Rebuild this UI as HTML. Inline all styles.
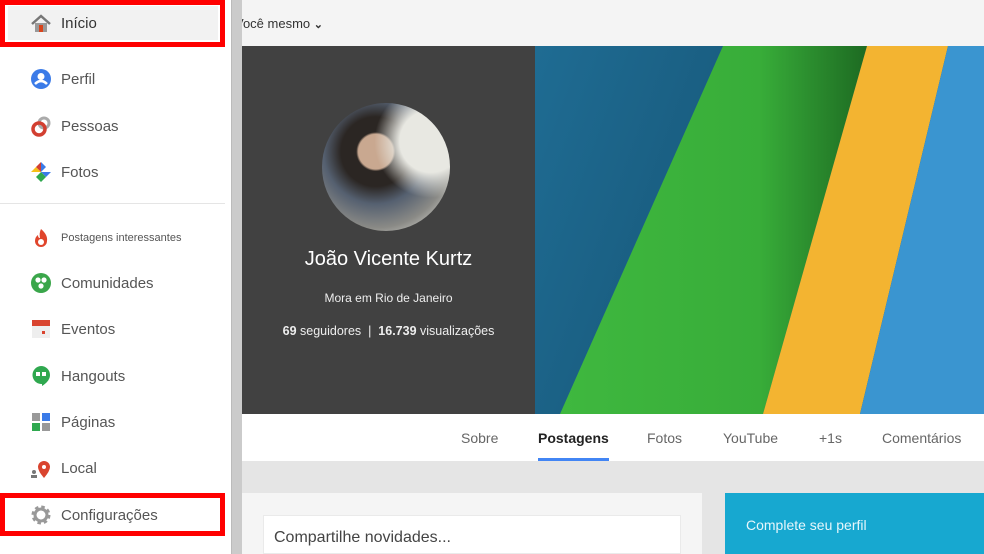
<!DOCTYPE html>
<html><head><meta charset="utf-8"><style>
*{margin:0;padding:0;box-sizing:border-box}
body{width:984px;height:554px;overflow:hidden;position:relative;background:#e5e5e5;font-family:"Liberation Sans",Arial,sans-serif}
.sb{position:absolute;left:0;top:0;width:231px;height:554px;background:#fff;z-index:2}
.strip{position:absolute;left:231px;top:0;width:11px;height:554px;background:#cbcbcb;border-left:1px solid #bbb;z-index:2}
.it{position:absolute;left:30px;height:24px;display:flex;align-items:center;font-size:15px;color:#555}
.it .ic{width:22px;height:22px;margin-right:9px;display:flex;align-items:center;justify-content:center}
.red{position:absolute;border:5px solid #f00}
.abs{position:absolute}
</style></head><body>
<div class="sb">
 <div class="abs" style="left:8px;top:6px;width:210px;height:34px;background:#f2f2f2"></div>
 <div class="red" style="left:0;top:0;width:225px;height:47px"></div>
 <div class="it" style="top:11px"><div class="ic"><svg width="22" height="20"><path d="M2 11L11 3L20 11" stroke="#777" stroke-width="2.5" fill="none"/><rect x="5" y="10" width="12" height="9" fill="#999"/><rect x="9" y="12" width="4" height="7" fill="#d9441c"/></svg></div><span style="color:#333">Início</span></div>
 <div class="it" style="top:67px"><div class="ic"><svg width="22" height="22"><circle cx="11" cy="11" r="10" fill="#3b7be8"/><circle cx="11" cy="8.5" r="3.5" fill="#fff"/><path d="M5 16q6-6 12 0" stroke="#fff" stroke-width="2.5" fill="none"/></svg></div>Perfil</div>
 <div class="it" style="top:114px"><div class="ic"><svg width="22" height="22"><circle cx="14" cy="8" r="5" fill="none" stroke="#aaa" stroke-width="3"/><circle cx="9" cy="14" r="6" fill="none" stroke="#d23f31" stroke-width="3.5"/></svg></div>Pessoas</div>
 <div class="it" style="top:160px"><div class="ic"><svg width="22" height="22"><path d="M11 11L11 1L16 6z" fill="#3b7be8"/><path d="M11 11L21 11L16 16z" fill="#3b7be8"/><path d="M11 11L11 21L6 16z" fill="#2fa84f"/><path d="M11 11L1 11L6 6z" fill="#f7c018"/><path d="M11 11L6 6L11 1z" fill="#d23f31"/><path d="M11 11L16 16L11 21z" fill="#2fa84f"/></svg></div>Fotos</div>
 <div class="abs" style="left:0;top:203px;width:225px;height:1px;background:#e5e5e5"></div>
 <div class="it" style="top:226px;font-size:11px"><div class="ic"><svg width="22" height="22"><path d="M11 2q7 6 6 12a6 6 0 0 1-12 0q0-4 3-6q0 3 2 3q-1-5 1-9z" fill="#e0452c"/><circle cx="11" cy="15" r="3" fill="#fff"/></svg></div>Postagens interessantes</div>
 <div class="it" style="top:271px"><div class="ic"><svg width="22" height="22"><circle cx="11" cy="11" r="10" fill="#3aa64a"/><circle cx="8" cy="8" r="2.6" fill="#fff"/><circle cx="14" cy="8" r="2.6" fill="#fff"/><circle cx="11" cy="14" r="2.6" fill="#fff"/></svg></div>Comunidades</div>
 <div class="it" style="top:317px"><div class="ic"><svg width="22" height="22"><rect x="2" y="2" width="18" height="18" fill="#eee"/><rect x="2" y="2" width="18" height="6" fill="#d9442f"/><rect x="12" y="13" width="3" height="3" fill="#d9442f"/></svg></div>Eventos</div>
 <div class="it" style="top:364px"><div class="ic"><svg width="22" height="22"><path d="M11 1a9 9 0 0 1 9 9q0 6-8 11v-2a9 9 0 0 1-1-18z" fill="#2fa84f"/><rect x="6" y="7" width="4" height="4" fill="#fff"/><rect x="12" y="7" width="4" height="4" fill="#fff"/></svg></div>Hangouts</div>
 <div class="it" style="top:410px"><div class="ic"><svg width="22" height="22"><rect x="2" y="2" width="8" height="8" fill="#999"/><rect x="12" y="2" width="8" height="8" fill="#3b7be8"/><rect x="2" y="12" width="8" height="8" fill="#2fa84f"/><rect x="12" y="12" width="8" height="8" fill="#999"/></svg></div>Páginas</div>
 <div class="it" style="top:456px"><div class="ic"><svg width="22" height="22"><circle cx="4" cy="15" r="2" fill="#777"/><rect x="1" y="18" width="6" height="3" fill="#777"/><path d="M14 21q-6-7-6-11a6 6 0 0 1 12 0q0 4-6 11z" fill="#d9442f"/><circle cx="14" cy="10" r="2" fill="#fff"/></svg></div>Local</div>
 <div class="red" style="left:0;top:493px;width:225px;height:43px"></div>
 <div class="it" style="top:503px"><div class="ic"><svg width="22" height="22"><circle cx="11" cy="11" r="7" fill="none" stroke="#999" stroke-width="5" stroke-dasharray="3 2.5"/><circle cx="11" cy="11" r="6" fill="none" stroke="#999" stroke-width="3"/></svg></div>Configurações</div>
</div>
<div class="strip"></div>
<div class="abs" style="left:242px;top:0;width:742px;height:46px;background:#f4f4f4"></div>
<div class="abs" style="left:235px;top:16px;font-size:13px;color:#333">Você mesmo <b style="font-size:11px">&#8964;</b></div>
<div class="abs" style="left:242px;top:46px;width:293px;height:368px;background:#414141"></div>
<div class="abs" style="left:322px;top:103px;width:128px;height:128px;border-radius:50%;background:radial-gradient(circle at 85% 30%,#e8e8e2 0 22%,transparent 40%),radial-gradient(circle at 42% 38%,#c9a890 0 16%,#2b2623 18% 32%,#556070 48%,#8a8a86 70%,#d8d8d2 90%)"></div>
<div class="abs" style="left:242px;top:248px;width:293px;text-align:center;color:#fff;font-size:20px">João Vicente Kurtz</div>
<div class="abs" style="left:242px;top:291px;width:293px;text-align:center;color:#eee;font-size:12px">Mora em Rio de Janeiro</div>
<div class="abs" style="left:242px;top:324px;width:293px;text-align:center;color:#eee;font-size:12.5px"><b>69</b> seguidores &nbsp;|&nbsp; <b>16.739</b> visualizações</div>
<svg class="abs" style="left:535px;top:46px" width="449" height="368">
<defs><linearGradient id="g" x1="0" y1="0" x2="1" y2="0.3"><stop offset="0" stop-color="#1f6c93"/><stop offset="1" stop-color="#124a68"/></linearGradient>
<linearGradient id="gr" x1="0" y1="0" x2="1" y2="0"><stop offset="0" stop-color="#3fb83f"/><stop offset="0.65" stop-color="#38ad39"/><stop offset="1" stop-color="#1d6a22"/></linearGradient></defs>
<rect width="449" height="368" fill="url(#g)"/>
<polygon points="188,0 332,0 228,368 25,368" fill="url(#gr)"/>
<polygon points="332,0 413,0 325,368 228,368" fill="#f3b431"/>
<polygon points="413,0 449,0 449,368 325,368" fill="#3a95d0"/>
</svg>
<div class="abs" style="left:242px;top:414px;width:742px;height:47px;background:#fff"></div>
<div class="abs" style="top:430px;left:461px;font-size:14px;color:#666">Sobre</div>
<div class="abs" style="top:430px;left:538px;font-size:14px;color:#222;font-weight:bold">Postagens</div>
<div class="abs" style="left:538px;top:458px;width:71px;height:3px;background:#4285f4"></div>
<div class="abs" style="top:430px;left:647px;font-size:14px;color:#666">Fotos</div>
<div class="abs" style="top:430px;left:723px;font-size:14px;color:#666">YouTube</div>
<div class="abs" style="top:430px;left:819px;font-size:14px;color:#666">+1s</div>
<div class="abs" style="top:430px;left:882px;font-size:14px;color:#666">Comentários</div>
<div class="abs" style="left:242px;top:493px;width:460px;height:61px;background:#f5f5f5"></div>
<div class="abs" style="left:263px;top:515px;width:418px;height:39px;background:#fff;border:1px solid #eaeaea"></div>
<div class="abs" style="left:274px;top:529px;font-size:16px;color:#444">Compartilhe novidades...</div>
<div class="abs" style="left:725px;top:493px;width:259px;height:61px;background:#17a8d0"></div>
<div class="abs" style="left:746px;top:517px;font-size:14px;color:#e6f6fb">Complete seu perfil</div>
</body></html>
